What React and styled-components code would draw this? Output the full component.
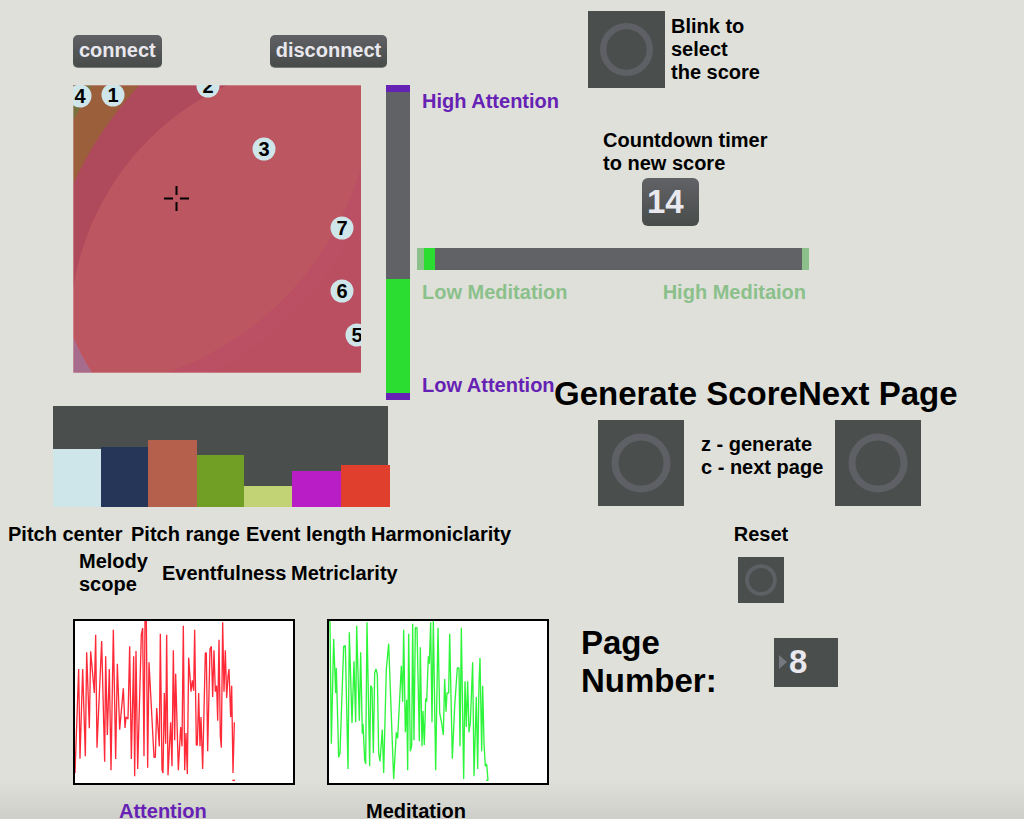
import React, { useState } from "react";
import styled, { createGlobalStyle } from "styled-components";

const colors = {
  page: "#dfe0da",
  panel: "#4a4e4c",
  track: "#616266",
  ring: "#5f6065",
  light: "#e8e8ee",
  green: "#2add30",
  purple: "#6622b4",
  sage: "#8bc08b",
};

const GlobalStyle = createGlobalStyle`
  *, *::before, *::after { box-sizing: border-box; }
  html { background: ${colors.page}; }
  body {
    margin: 0;
    color: #000;
    font: bold 20px/23px "Liberation Sans", Arial, sans-serif;
  }
  button, input, output { font: inherit; color: inherit; }
`;

const Page = styled.main`
  display: grid;
  grid-template-columns: 417px 137px 1fr;
  grid-template-rows: auto minmax(26px, auto) 1fr;
  min-height: 100vh;
  background: linear-gradient(to top, #cfcfca, rgba(207, 207, 202, 0) 40px) ${colors.page};
`;

/* Pad and attention slider */

const PadSection = styled.section`
  grid-column: 1;
  grid-row: 1 / span 2;
  display: flex;
  flex-direction: column;
  gap: 17px;
  padding: 35px 7px 0 73px;
`;

const DeviceButtons = styled.div`
  display: flex;
  gap: 108px;
`;

const DeviceButton = styled.button`
  height: 33px;
  padding: 0 6px 2px;
  border: 1px solid #77797a;
  border-width: 0 0 1px;
  border-radius: 5px;
  background: linear-gradient(#606165, #474b49);
  color: ${colors.light};
`;

const PadRow = styled.div`
  display: flex;
  justify-content: space-between;
  align-items: flex-start;
`;

const PadCanvas = styled.svg`
  display: block;
  width: 288px;
  height: 288px;
`;

const Slider = styled.input`
  appearance: none;
  display: block;
  margin: 0;
  border: 0 solid ${(p) => p.$cap};
  background: linear-gradient(
    ${(p) => (p.$vertical ? "to top" : "to right")},
    ${colors.green} ${(p) => p.value}%,
    ${colors.track} ${(p) => p.value}%
  );
  ${(p) =>
    p.$vertical
      ? "writing-mode: vertical-lr; direction: rtl; width: 24px; height: 315px; border-width: 7px 0;"
      : "width: 392px; height: 22px; border-width: 0 7px;"}

  &::-webkit-slider-thumb {
    appearance: none;
    width: 1px;
    height: 1px;
    background: transparent;
  }
`;

/* Status area */

const StatusSection = styled.section`
  grid-column: 2 / span 2;
  grid-row: 1;
  padding-bottom: 70px;
`;

const StatusTop = styled.div`
  display: flex;
  align-items: flex-start;
  height: 248px;
  padding: 11px 0 0 5px;
`;

const HighLabel = styled.label`
  flex: 0 0 166px;
  padding-top: 79px;
  color: ${colors.purple};
`;

const LowLabel = styled.label`
  grid-column: 2;
  grid-row: 2;
  padding-left: 5px;
  white-space: nowrap;
  color: ${colors.purple};
`;

const BlinkRow = styled.div`
  display: flex;
  align-items: center;
  gap: 6px;
`;

const Countdown = styled.div`
  padding: 41px 0 0 15px;
`;

const CountdownValue = styled.output`
  display: flex;
  align-items: center;
  width: 57px;
  height: 48px;
  margin: 3px 0 0 39px;
  padding-left: 5px;
  border-radius: 6px;
  background: linear-gradient(#616266, #484c4a);
  color: ${colors.light};
  font-size: 33px;
  line-height: 38px;
`;

const MeditationLabels = styled.div`
  display: flex;
  justify-content: space-between;
  width: 392px;
  padding: 11px 3px 0 5px;
  color: ${colors.sage};
`;

const Bang = styled.button`
  flex: none;
  display: block;
  width: ${(p) => p.$size}px;
  height: ${(p) => p.$size}px;
  padding: 0;
  border: 0;
  background: ${colors.panel};

  svg {
    display: block;
    width: 100%;
    height: 100%;
  }
`;

/* Score controls */

const ScoreSection = styled.section`
  grid-column: 3;
  grid-row: 2 / span 2;
  padding-top: 1px;
`;

const ScoreTitles = styled.div`
  display: flex;
  font-size: 33px;
  line-height: 38px;
  white-space: nowrap;
`;

const ScoreButtons = styled.div`
  display: flex;
  align-items: center;
  padding: 7px 0 0 44px;
`;

const KeyHints = styled.p`
  flex: 0 0 151px;
  margin: 0;
  padding: 0 0 14px 17px;
  white-space: nowrap;
`;

const ResetGroup = styled.div`
  display: flex;
  flex-direction: column;
  align-items: center;
  gap: 11px;
  width: 56px;
  margin: 17px 0 0 179px;
`;

const PageNumberRow = styled.div`
  display: flex;
  align-items: center;
  padding: 21px 0 0 27px;
`;

const PageNumberLabel = styled.label`
  flex: 0 0 193px;
  font-size: 33px;
  line-height: 38px;
`;

const NumberBox = styled.div`
  display: flex;
  align-items: center;
  gap: 2px;
  width: 64px;
  height: 49px;
  padding-left: 5px;
  background: ${colors.panel};
`;

const NumberInput = styled.input`
  width: 40px;
  padding: 0;
  border: 0;
  background: none;
  color: ${colors.light};
  font-size: 33px;
  line-height: 38px;
`;

/* Analysis area */

const AnalysisSection = styled.section`
  grid-column: 1 / span 2;
  grid-row: 3;
  padding-top: 6px;
`;

const MultiSlider = styled.div`
  display: flex;
  align-items: flex-end;
  width: 335px;
  height: 101px;
  margin-left: 53px;
  background: ${colors.panel};
`;

const Bar = styled.div`
  flex: none;
  width: ${(p) => p.$width}px;
  height: ${(p) => p.$height}px;
  background: ${(p) => p.$color};
`;

const ParameterLabels = styled.div`
  display: grid;
  grid-template-columns: ${(p) => p.$columns};
  align-items: center;
  padding: ${(p) => p.$padding};
  white-space: nowrap;
`;

const Charts = styled.div`
  display: flex;
  gap: 32px;
  padding: 23px 0 0 73px;
`;

const Figure = styled.figure`
  margin: 0;
`;

const ChartFrame = styled.svg`
  display: block;
  width: 222px;
  height: 166px;
  border: 2px solid #000;
  background: #fff;
`;

const Caption = styled.figcaption`
  padding: 19px 0 0 ${(p) => p.$indent}px;
  color: ${(p) => p.$color};
  line-height: 15px;
`;

const nodes = [
  [1, 40, 10],
  [2, 135, 1],
  [3, 191, 64],
  [4, 7, 11],
  [5, 284, 250],
  [6, 269, 206],
  [7, 269, 143],
];

const bars = [
  [48, 58, "#cee6e9"],
  [47, 60, "#263659"],
  [49, 67, "#b5604d"],
  [47, 52, "#719f25"],
  [48, 21, "#c2d376"],
  [49, 36, "#b91dc6"],
  [49, 42, "#e03f2e"],
];

const attentionTrace =
  "31,490 42,178 46,447 54,178 62,440 66,128 74,356 78,125 89,250 93,75 97,414 111,94 120,456 123,140 128,376 134,178 139,482 146,60 153,448 158,162 165,360 176,236 181,355 184,322 190,328 195,110 200,448 207,140 210,500 214,124 219,478 230,75 234,55 238,440 241,34 245,34 249,474 253,158 268,443 272,443 276,295 284,410 287,72 292,480 295,490 299,250 303,402 306,75 310,497 318,338 322,470 326,122 330,392 333,192 341,482 348,352 352,410 356,48 360,482 364,370 368,493 372,144 379,246 383,212 387,243 390,60 395,406 398,406 402,250 406,410 409,322 414,478 422,130 425,130 429,425 436,118 440,110 444,262 448,122 452,246 456,228 459,333 463,90 467,380 470,414 474,38 478,246 482,122 486,265 490,200 493,178 498,322 501,228 505,490 509,338";

const meditationTrace =
  "28,34 31,36 35,402 42,88 48,250 50,175 57,443 61,430 72,110 77,108 85,478 89,68 97,340 103,155 108,338 111,48 119,333 123,128 128,372 130,342 135,450 138,463 142,38 150,470 153,228 157,235 161,430 165,190 169,178 173,195 177,430 181,455 188,360 192,490 200,178 207,102 222,508 230,368 234,386 245,168 249,276 252,60 257,368 261,270 264,482 267,72 272,425 276,408 279,42 283,392 287,54 292,54 299,395 302,113 307,410 310,304 314,406 318,266 321,276 326,140 329,162 333,38 337,338 341,34 348,482 355,54 360,310 366,340 371,376 375,208 379,306 382,250 387,250 390,72 398,447 405,290 413,175 418,175 421,410 425,54 432,508 436,215 440,352 444,215 448,368 452,340 459,158 463,500 470,262 474,478 478,220 481,145 486,425 489,228 493,400 497,470 501,463 505,512 499,512";

function BangButton({ size, label }) {
  return (
    <Bang type="button" $size={size} aria-label={label}>
      <svg viewBox="0 0 86 86" aria-hidden="true">
        <circle cx="43" cy="43" r="26" fill="none" stroke={colors.ring} strokeWidth="7" />
      </svg>
    </Bang>
  );
}

function Pad() {
  return (
    <PadCanvas viewBox="0 0 288 288" role="img" aria-label="Node space">
      <rect width="288" height="288" fill="#74733f" />
      <circle cx="330" cy="190" r="364" fill="#9b5f3c" />
      <circle cx="325" cy="245" r="356" fill="#ae4a5b" />
      <circle cx="266" cy="245" r="269" fill="#b94f61" />
      <clipPath id="inner">
        <circle cx="266" cy="245" r="269" />
      </clipPath>
      <g clipPath="url(#inner)">
        <circle cx="-8" cy="-3" r="325" fill="#bb5064" />
        <circle cx="-8" cy="-3" r="308" fill="#bc5660" />
      </g>
      <path d="M0 250Q8 270 20 288H0Z" fill="#a76b8b" />
      <path d="M0 250Q8 270 20 288" fill="none" stroke="#c6525a" strokeWidth="1" />
      <path d="M0.500 288V0.500H288M0 287.500H288" fill="none" stroke="#d9a5a5" strokeOpacity="0.500" />
      {nodes.map(([n, x, y]) => (
        <g key={n}>
          <circle cx={x} cy={y} r="11.500" fill="#cee6e9" />
          <text x={x} y={y + 7} textAnchor="middle">
            {n}
          </text>
        </g>
      ))}
      <path d="M91 113.500h9M107 113.500h9M103.500 101v9M103.500 117v9" stroke="#000" strokeWidth="2" />
    </PadCanvas>
  );
}

export default function App() {
  const [attention, setAttention] = useState(38);
  const [meditation, setMeditation] = useState(3);
  const [page, setPage] = useState("8");

  return (
    <>
      <GlobalStyle />
      <Page>
        <PadSection>
          <DeviceButtons>
            <DeviceButton type="button">connect</DeviceButton>
            <DeviceButton type="button">disconnect</DeviceButton>
          </DeviceButtons>
          <PadRow>
            <Pad />
            <Slider
              id="attention"
              type="range"
              $vertical
              $cap={colors.purple}
              value={attention}
              onChange={(e) => setAttention(e.target.value)}
            />
          </PadRow>
        </PadSection>

        <StatusSection>
          <StatusTop>
            <HighLabel htmlFor="attention">High Attention</HighLabel>
            <div>
              <BlinkRow>
                <BangButton size={77} label="Blink" />
                <span>
                  Blink to
                  <br />
                  select
                  <br />
                  the score
                </span>
              </BlinkRow>
              <Countdown>
                <label htmlFor="countdown">
                  Countdown timer
                  <br />
                  to new score
                </label>
                <CountdownValue id="countdown">14</CountdownValue>
              </Countdown>
            </div>
          </StatusTop>
          <Slider
            id="meditation"
            type="range"
            $cap={colors.sage}
            value={meditation}
            onChange={(e) => setMeditation(e.target.value)}
          />
          <MeditationLabels>
            <label htmlFor="meditation">Low Meditation</label>
            <label htmlFor="meditation">High Meditaion</label>
          </MeditationLabels>
        </StatusSection>

        <LowLabel htmlFor="attention">Low Attention</LowLabel>

        <ScoreSection>
          <ScoreTitles>
            <span>Generate Score</span>
            <span>Next Page</span>
          </ScoreTitles>
          <ScoreButtons>
            <BangButton size={86} label="Generate Score" />
            <KeyHints>
              z - generate
              <br />c - next page
            </KeyHints>
            <BangButton size={86} label="Next Page" />
          </ScoreButtons>
          <ResetGroup>
            <span>Reset</span>
            <BangButton size={46} label="Reset" />
          </ResetGroup>
          <PageNumberRow>
            <PageNumberLabel htmlFor="page-number">
              Page
              <br />
              Number:
            </PageNumberLabel>
            <NumberBox>
              <svg width="8" height="16" viewBox="0 0 8 16" aria-hidden="true">
                <path d="M0 1L8 8L0 15Z" fill="#77787f" />
              </svg>
              <NumberInput id="page-number" value={page} onChange={(e) => setPage(e.target.value)} />
            </NumberBox>
          </PageNumberRow>
        </ScoreSection>

        <AnalysisSection>
          <MultiSlider>
            {bars.map(([width, height, color]) => (
              <Bar key={color} $width={width} $height={height} $color={color} />
            ))}
          </MultiSlider>
          <ParameterLabels $columns="123px 115px 125px auto" $padding="16px 0 0 8px">
            <span>Pitch center</span>
            <span>Pitch range</span>
            <span>Event length</span>
            <span>Harmoniclarity</span>
          </ParameterLabels>
          <ParameterLabels $columns="83px 129px auto" $padding="4px 0 0 79px">
            <span>
              Melody
              <br />
              scope
            </span>
            <span>Eventfulness</span>
            <span>Metriclarity</span>
          </ParameterLabels>
          <Charts>
            <Figure>
              <ChartFrame viewBox="31 34 654 486" role="img" aria-label="Attention history">
                <g fill="none" stroke="#ff2a38" strokeWidth="4" strokeLinejoin="bevel">
                  <polyline points={attentionTrace} />
                  <path d="M503 512H511" />
                </g>
              </ChartFrame>
              <Caption $color={colors.purple} $indent={46}>
                Attention
              </Caption>
            </Figure>
            <Figure>
              <ChartFrame viewBox="28 34 654 486" role="img" aria-label="Meditation history">
                <polyline
                  points={meditationTrace}
                  fill="none"
                  stroke="#2cf53a"
                  strokeWidth="4"
                  strokeLinejoin="bevel"
                />
              </ChartFrame>
              <Caption $color="#000" $indent={39}>
                Meditation
              </Caption>
            </Figure>
          </Charts>
        </AnalysisSection>
      </Page>
    </>
  );
}
